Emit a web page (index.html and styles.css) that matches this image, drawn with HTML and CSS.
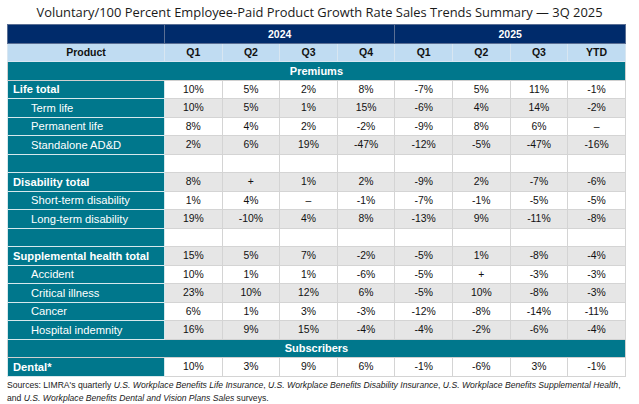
FILE: index.html
```html
<!DOCTYPE html>
<html>
<head>
<meta charset="utf-8">
<link rel="stylesheet" href="styles.css">
</head>
<body>
<div class="page">
  <h1 class="title">Voluntary/100 Percent Employee-Paid Product Growth Rate Sales Trends Summary — 3Q 2025</h1>
  <table class="grid">
    <colgroup>
      <col class="c-prod"><col class="c-num"><col class="c-num"><col class="c-num"><col class="c-num"><col class="c-num"><col class="c-num"><col class="c-num"><col class="c-num">
    </colgroup>
    <thead>
      <tr class="years">
        <th></th>
        <th colspan="4">2024</th>
        <th colspan="4">2025</th>
      </tr>
      <tr class="quarters">
        <th>Product</th>
        <th>Q1</th><th>Q2</th><th>Q3</th><th>Q4</th>
        <th>Q1</th><th>Q2</th><th>Q3</th><th>YTD</th>
      </tr>
    </thead>
    <tbody>
      <tr class="section"><td colspan="9">Premiums</td></tr>
      <tr class="odd"><th class="total">Life total</th><td>10%</td><td>5%</td><td>2%</td><td>8%</td><td>-7%</td><td>5%</td><td>11%</td><td>-1%</td></tr>
      <tr class="even"><th class="sub">Term life</th><td>10%</td><td>5%</td><td>1%</td><td>15%</td><td>-6%</td><td>4%</td><td>14%</td><td>-2%</td></tr>
      <tr class="odd"><th class="sub">Permanent life</th><td>8%</td><td>4%</td><td>2%</td><td>-2%</td><td>-9%</td><td>8%</td><td>6%</td><td>–</td></tr>
      <tr class="even"><th class="sub">Standalone AD&amp;D</th><td>2%</td><td>6%</td><td>19%</td><td>-47%</td><td>-12%</td><td>-5%</td><td>-47%</td><td>-16%</td></tr>
      <tr class="odd"><th></th><td></td><td></td><td></td><td></td><td></td><td></td><td></td><td></td></tr>
      <tr class="even"><th class="total">Disability total</th><td>8%</td><td>+</td><td>1%</td><td>2%</td><td>-9%</td><td>2%</td><td>-7%</td><td>-6%</td></tr>
      <tr class="odd"><th class="sub">Short-term disability</th><td>1%</td><td>4%</td><td>–</td><td>-1%</td><td>-7%</td><td>-1%</td><td>-5%</td><td>-5%</td></tr>
      <tr class="even"><th class="sub">Long-term disability</th><td>19%</td><td>-10%</td><td>4%</td><td>8%</td><td>-13%</td><td>9%</td><td>-11%</td><td>-8%</td></tr>
      <tr class="odd"><th></th><td></td><td></td><td></td><td></td><td></td><td></td><td></td><td></td></tr>
      <tr class="even"><th class="total">Supplemental health total</th><td>15%</td><td>5%</td><td>7%</td><td>-2%</td><td>-5%</td><td>1%</td><td>-8%</td><td>-4%</td></tr>
      <tr class="odd"><th class="sub">Accident</th><td>10%</td><td>1%</td><td>1%</td><td>-6%</td><td>-5%</td><td>+</td><td>-3%</td><td>-3%</td></tr>
      <tr class="even"><th class="sub">Critical illness</th><td>23%</td><td>10%</td><td>12%</td><td>6%</td><td>-5%</td><td>10%</td><td>-8%</td><td>-3%</td></tr>
      <tr class="odd"><th class="sub">Cancer</th><td>6%</td><td>1%</td><td>3%</td><td>-3%</td><td>-12%</td><td>-8%</td><td>-14%</td><td>-11%</td></tr>
      <tr class="even"><th class="sub">Hospital indemnity</th><td>16%</td><td>9%</td><td>15%</td><td>-4%</td><td>-4%</td><td>-2%</td><td>-6%</td><td>-4%</td></tr>
      <tr class="section"><td colspan="9">Subscribers</td></tr>
      <tr class="odd"><th class="total">Dental*</th><td>10%</td><td>3%</td><td>9%</td><td>6%</td><td>-1%</td><td>-6%</td><td>3%</td><td>-1%</td></tr>
    </tbody>
  </table>
  <p class="sources">Sources: LIMRA's quarterly <i>U.S. Workplace Benefits Life Insurance</i>, <i>U.S. Workplace Benefits Disability Insurance</i>, <i>U.S. Workplace Benefits Supplemental Health</i>, and <i>U.S. Workplace Benefits Dental and Vision Plans Sales</i> surveys.</p>
</div>
</body>
</html>
```

FILE: styles.css
```css
html, body {
  margin: 0;
  padding: 0;
  background: #ffffff;
}

.page {
  width: 639px;
  padding: 0 7px;
  box-sizing: border-box;
  font-family: "Liberation Sans", Arial, sans-serif;
}

.title {
  margin: 0;
  height: 24px;
  line-height: 24px;
  font-family: "Open Sans", "Liberation Sans", sans-serif;
  font-weight: 400;
  font-size: 12.9px;
  color: #1a1a1a;
  text-align: center;
  white-space: nowrap;
}

.grid {
  width: 618px;
  border-collapse: collapse;
  table-layout: fixed;
}

.c-prod { width: 157px; }
.c-num { width: 57.6px; }

.grid th, .grid td {
  height: 18.5px;
  padding: 0;
  box-sizing: border-box;
  border: 1px solid #d4d4d4;
  text-align: center;
  vertical-align: middle;
  white-space: nowrap;
  overflow: hidden;
}

.grid .years th {
  background: #002b6b;
  color: #ffffff;
  font-weight: 700;
  font-size: 10.5px;
  border-color: #5a6f94;
}

.grid .quarters th {
  background: #c0dcf2;
  color: #111111;
  font-weight: 700;
  font-size: 10.5px;
  border-color: #d8e6f1;
}

.grid .section td {
  background: #00778c;
  color: #ffffff;
  font-weight: 700;
  font-size: 11px;
  border-color: #d0d0d0;
}

.grid tbody th {
  background: #00778c;
  color: #ffffff;
  text-align: left;
  font-size: 11.2px;
  border-color: #d6e8ec;
}

.grid tbody th.total {
  font-weight: 700;
  padding-left: 5px;
}

.grid tbody th.sub {
  font-weight: 400;
  padding-left: 23px;
}

.grid tbody td {
  font-size: 10.4px;
  color: #111111;
}

.grid tr.odd td { background: #ffffff; }
.grid tr.even td { background: #e6e6e6; }

.sources {
  margin: 2px 0 0 0;
  font-size: 8.6px;
  line-height: 13px;
  color: #1a1a1a;
}
```
